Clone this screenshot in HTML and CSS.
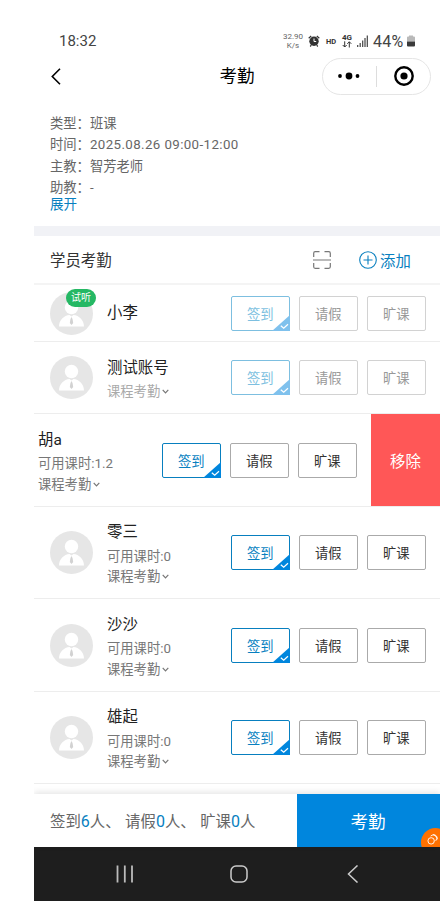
FILE: index.html
```html
<!DOCTYPE html>
<html lang="zh-CN">
<head>
<meta charset="utf-8">
<title>考勤</title>
<link rel="stylesheet" href="styles.css">
</head>
<body>
<svg class="defs" aria-hidden="true">
  <symbol id="avatar" viewBox="0 0 43 43">
    <circle cx="21.5" cy="21.5" r="21.5" fill="#e6e6e6"/>
    <circle cx="21.5" cy="15.5" r="6.700" fill="#fff"/>
    <path d="M9 34.500C9 28 14 23.500 19.500 23L21.500 24.500L23.500 23C29 23.500 34 28 34 34.500Z" fill="#fff"/>
    <path d="M21.500 25L22.500 27L23.200 31L21.500 33L19.800 31L20.500 27Z" fill="#d2d2d2"/>
  </symbol>
  <symbol id="tick" viewBox="0 0 18 16">
    <path d="M18 0V16H0Z" fill="currentColor"/>
    <path d="M8.800 10.700L11.700 13.300L16 9.200" fill="none" stroke="#fff" stroke-width="1.200"/>
  </symbol>
  <symbol id="chevron" viewBox="0 0 7 5">
    <path d="M.7.800L3.500 3.800L6.300.800" fill="none" stroke="currentColor" stroke-width="1.200"/>
  </symbol>
</svg>
<div class="phone">
  <header class="status">
    <span class="clock">18:32</span>
    <div class="speed"><span>32.90</span><span>K/s</span></div>
    <svg class="alarm" viewBox="0 0 12 12"><circle cx="6" cy="6.300" r="4.700" fill="#333"/><path d="M.7 3.200L3.200 1M11.300 3.200L8.800 1M2.200 11.500L3.300 10.200M9.800 11.500L8.700 10.200" stroke="#333" stroke-width="1.200"/><path d="M6 3.500V6.500H8.200" fill="none" stroke="#fff" stroke-width="1"/></svg>
    <span class="hd">HD</span>
    <span class="net"><b>4G</b><svg viewBox="0 0 10 7"><path d="M2.700.300V6M.7 4L2.700 6L4.700 4M7.300 6.500V.800M5.300 2.800L7.300.800L9.300 2.800" fill="none" stroke="#333"/></svg></span>
    <svg class="signal" viewBox="0 0 11 12"><path d="M.7 10V12M3.200 8V12M5.700 5.500V12M8 3V12M10.300.500V12" stroke="#444" stroke-width="1.200"/></svg>
    <span class="percent">44%</span>
    <svg class="battery" viewBox="0 0 8 12"><path d="M2 .500H6V1.500H7Q8 1.500 8 2.500V6.500H0V2.500Q0 1.500 1 1.500H2Z" fill="#b9b9b9"/><path d="M0 6.500H8V10.500Q8 11.500 7 11.500H1Q0 11.500 0 10.500Z" fill="#3a3a3a"/></svg>
  </header>
  <nav class="titlebar">
    <svg class="back" viewBox="0 0 10 17"><path d="M9 .800L1.300 8.500L9 16.200" fill="none" stroke="#000" stroke-width="1.600"/></svg>
    <h1>考勤</h1>
    <div class="capsule">
      <svg class="dots" viewBox="0 0 22 8"><circle cx="2" cy="4" r="1.900"/><circle cx="11" cy="4" r="3.400"/><circle cx="19.500" cy="4" r="1.900"/></svg>
      <i></i>
      <svg class="target" viewBox="0 0 20 20"><circle cx="10" cy="10" r="8.700" fill="none" stroke="#000" stroke-width="2.400"/><circle cx="10" cy="10" r="3.600"/></svg>
    </div>
  </nav>
  <section class="info">
    <div class="lines">
      <p>类型：班课</p>
      <p>时间：<span class="date">2025.08.26 09:00-12:00</span></p>
      <p>主教：智芳老师</p>
      <p>助教：-</p>
    </div>
    <a>展开</a>
  </section>
  <div class="heading">
    <h2>学员考勤</h2>
    <svg class="scan" viewBox="0 0 18 18"><path d="M.7 6V2.200Q.7.700 2.200.700H6.500M11.500.700H15.800Q17.300.700 17.300 2.200V6M17.300 12V15.800Q17.300 17.300 15.800 17.300H11.500M6.500 17.300H2.200Q.7 17.300.7 15.800V12M0 9H18" fill="none" stroke="#777" stroke-width="1.200"/></svg>
    <svg class="plus" viewBox="0 0 18 18"><path d="M9 4.500V13.500M4.500 9H13.500" stroke="#087fbf" stroke-width="1.100"/><circle cx="9" cy="9" r="8.300" fill="none" stroke="#087fbf" stroke-width="1.100"/></svg>
    <span class="add">添加</span>
  </div>
  <main>
    <div class="row r1 faded">
      <div class="face"><svg class="avatar"><use href="#avatar"/></svg><span class="badge">试听</span></div>
      <div class="who"><b>小李</b></div>
      <div class="choices"><span class="on">签到<svg><use href="#tick"/></svg></span><span>请假</span><span>旷课</span></div>
    </div>
    <div class="row r2 faded">
      <div class="face"><svg class="avatar"><use href="#avatar"/></svg></div>
      <div class="who"><b>测试账号</b><p>课程考勤<svg><use href="#chevron"/></svg></p></div>
      <div class="choices"><span class="on">签到<svg><use href="#tick"/></svg></span><span>请假</span><span>旷课</span></div>
    </div>
    <div class="row r3 swiped">
      <div class="who"><b>胡a</b><p>可用课时:1.2</p><p>课程考勤<svg><use href="#chevron"/></svg></p></div>
      <div class="choices"><span class="on">签到<svg><use href="#tick"/></svg></span><span>请假</span><span>旷课</span></div>
      <div class="remove">移除</div>
    </div>
    <div class="row r4">
      <div class="face"><svg class="avatar"><use href="#avatar"/></svg></div>
      <div class="who"><b>零三</b><p>可用课时:0</p><p>课程考勤<svg><use href="#chevron"/></svg></p></div>
      <div class="choices"><span class="on">签到<svg><use href="#tick"/></svg></span><span>请假</span><span>旷课</span></div>
    </div>
    <div class="row r5">
      <div class="face"><svg class="avatar"><use href="#avatar"/></svg></div>
      <div class="who"><b>沙沙</b><p>可用课时:0</p><p>课程考勤<svg><use href="#chevron"/></svg></p></div>
      <div class="choices"><span class="on">签到<svg><use href="#tick"/></svg></span><span>请假</span><span>旷课</span></div>
    </div>
    <div class="row r6">
      <div class="face"><svg class="avatar"><use href="#avatar"/></svg></div>
      <div class="who"><b>雄起</b><p>可用课时:0</p><p>课程考勤<svg><use href="#chevron"/></svg></p></div>
      <div class="choices"><span class="on">签到<svg><use href="#tick"/></svg></span><span>请假</span><span>旷课</span></div>
    </div>
  </main>
  <footer class="summary">
    <div class="counts"><span>签到<em>6</em>人、</span><span>请假<em>0</em>人、</span><span>旷课<em>0</em>人</span></div>
    <div class="submit">考勤
      <div class="float"><svg viewBox="0 0 12 12"><circle cx="4.500" cy="7.500" r="3.500"/><path d="M4 2.200A3.800 3.800 0 1 1 9.500 7.500M6.500.800A4 4 0 0 1 11 6"/></svg></div>
    </div>
  </footer>
  <div class="keys">
    <svg viewBox="0 0 18 18"><path d="M1.500.500V17.500M8.800.500V17.500M16 .500V17.500" stroke="#bbb" stroke-width="1.800"/></svg>
    <svg viewBox="0 0 18 18"><rect x="1" y="1" width="16" height="16" rx="5" fill="none" stroke="#ccc" stroke-width="1.500"/></svg>
    <svg viewBox="0 0 18 18"><path d="M13.500.500L4.500 9L13.500 17.500" fill="none" stroke="#ccc" stroke-width="1.500"/></svg>
  </div>
</div>
</body>
</html>
```
FILE: styles.css
```css
* { box-sizing: border-box; }
body { margin: 0; background: #fff; font-family: Roboto, "Noto Sans CJK SC", sans-serif; color: #333; }
h1, h2, p { margin: 0; font-weight: 400; }
svg { display: block; flex: none; }
.defs { width: 0; height: 0; position: absolute; }
.phone { width: 406px; height: 901px; margin-left: 34px; padding-top: 28px; display: flex; flex-direction: column; overflow: hidden; }

.status { height: 26px; display: flex; align-items: center; padding-left: 25px; flex: none; }
.clock { font-size: 15px; width: 222px; flex: none; color: #444; }
.speed { width: 24px; display: flex; flex-direction: column; align-items: center; font-size: 8px; line-height: 9px; color: #666; flex: none; }
.alarm { width: 12px; height: 12px; margin-left: 3px; }
.hd { font-size: 7.500px; font-weight: 700; margin-left: 6px; width: 11px; }
.net { display: flex; flex-direction: column; align-items: center; width: 12px; margin-left: 4px; }
.net b { font-size: 8px; line-height: 7px; }
.net svg { width: 10px; height: 7px; }
.signal { width: 11px; height: 12px; margin-left: 4px; }
.percent { font-size: 16px; width: 33px; margin-left: 5px; color: #444; flex: none; letter-spacing: .2px; }
.battery { width: 8px; height: 12px; margin-left: 1px; }

.titlebar { height: 44px; display: grid; grid-template-columns: 109px 1fr 109px; align-items: center; padding: 0 9px 0 0; flex: none; }
.back { width: 10px; height: 17px; margin-left: 17px; }
h1 { font-size: 17.500px; line-height: 24px; color: #000; text-align: center; padding: 0 0 0 9px; }
.capsule { height: 37px; border: 1px solid #e5e5e5; border-radius: 19px; display: flex; align-items: center; }
.dots { width: 22px; height: 8px; margin-left: 15px; }
.capsule i { width: 1px; height: 21px; background: #ddd; margin: 0 17px 0 16px; }
.target { width: 20px; height: 20px; }

.info { height: 128px; padding: 15px 16px 0; font-size: 13.300px; color: #666; flex: none; }
.lines { height: 80px; }
.lines p { line-height: 21.300px; height: 21.300px; }
.info a { display: block; font-size: 13.600px; line-height: 22px; color: #087fbf; }
.date { letter-spacing: .4px; }

.heading { height: 59px; border-top: 10px solid #f1f2f6; border-bottom: 2px solid #f4f4f4; display: flex; align-items: center; padding: 0 16px; flex: none; }
h2 { font-size: 15.400px; line-height: 24px; width: 263px; padding-top: 2px; }
.scan { width: 18px; height: 18px; }
.plus { width: 18px; height: 18px; margin-left: 28px; }
.add { font-size: 15.400px; color: #087fbf; margin-left: 3px; }

.row { display: flex; align-items: center; padding: 0 14px 0 16px; border-bottom: 1px solid #ededed; }
.r1 { height: 57px; }
.r2 { height: 72px; }
.r3, .r5 { height: 93px; }
.r4, .r6 { height: 92px; }
.face { position: relative; width: 43px; margin-right: 14px; }
.avatar { width: 43px; height: 43px; }
.badge { position: absolute; left: 16px; top: -3px; width: 30px; height: 18px; border-radius: 9px; background: #25b864; color: #fff; font-size: 10px; line-height: 18px; text-align: center; }
.who { padding-top: 2px; }
.who b { display: block; font-weight: 400; font-size: 15.400px; line-height: 27.500px; color: #222; }
.who p { font-size: 13.300px; line-height: 20.500px; height: 20.500px; color: #777; display: flex; align-items: center; }
.who svg { width: 7px; height: 5px; margin-left: 2px; margin-bottom: 2px; }
.choices { margin-left: auto; display: flex; gap: 8.500px; }
.choices span { position: relative; width: 59.500px; height: 35px; border: 1px solid #aaa; border-radius: 2px; font-size: 13.300px; line-height: 35px; text-align: center; color: #333; }
.choices .on { border-color: #087fbf; color: #087fbf; }
.choices svg { position: absolute; right: -1px; bottom: -1px; width: 18px; height: 16px; color: #0086dd; }
.faded .choices span { border-color: #d2d2d2; color: #999; }
.faded .choices .on { border-color: #7dbfe0; color: #7dbfe0; }
.faded .choices svg { color: #7fc1ed; }
.faded .who p { color: #aaa; }
.faded .who svg { color: #777; }
.swiped { padding: 0 0 0 4px; }
.remove { width: 69px; height: 92px; margin-left: 14px; background: #ff5757; color: #fff; font-size: 15.400px; line-height: 96px; text-align: center; }

.summary { height: 53px; margin-top: auto; display: flex; box-shadow: 0 -2px 6px rgba(0, 0, 0, .1); position: relative; flex: none; }
.counts { width: 263px; padding-left: 16px; display: flex; gap: 4.500px; font-size: 15.400px; line-height: 55px; height: 53px; color: #666; white-space: nowrap; background: #fff; }
.counts em { font-style: normal; font-size: 16px; color: #087fbf; }
.submit { position: relative; flex: 1; padding-right: 1px; background: #0086dd; color: #fff; font-size: 17.500px; line-height: 56px; text-align: center; overflow: hidden; }
.float { position: absolute; right: -10px; bottom: -10px; width: 29px; height: 29px; border-radius: 50%; background: #ff7100; padding: 6px; }
.float svg { width: 11px; height: 11px; fill: none; stroke: #fff; stroke-width: 1; }
.keys { height: 54px; background: #1e1e1e; display: flex; align-items: center; padding-left: 82px; gap: 96px; flex: none; }
.keys svg { width: 18px; height: 18px; }
```
